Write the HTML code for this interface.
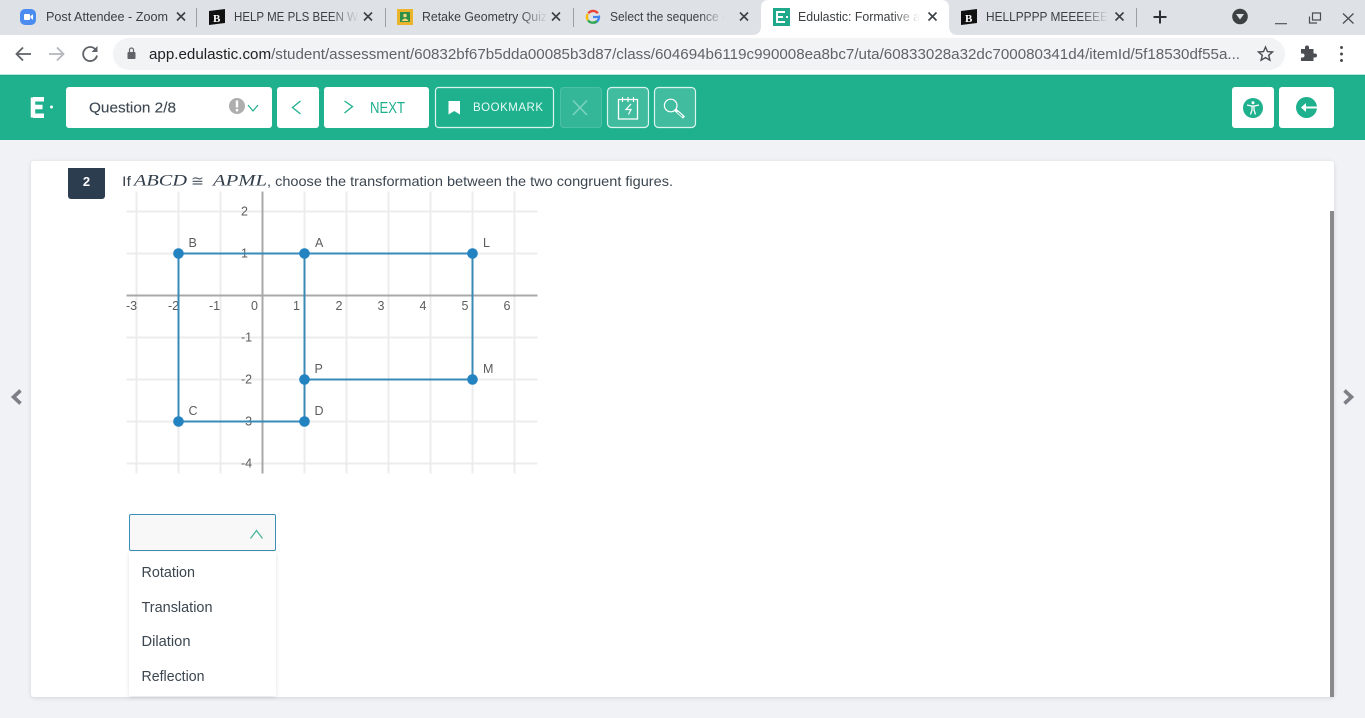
<!DOCTYPE html>
<html><head><meta charset="utf-8"><title>Edulastic</title>
<style>
html,body{margin:0;padding:0;width:1365px;height:718px;overflow:hidden;background:#f0f2f6}
svg{display:block;position:absolute;left:0;top:0;filter:blur(.3px)}
text{font-family:"Liberation Sans",sans-serif}
.tab{font-size:12.5px;fill:#3c4043}
.x{stroke:#3c4043;stroke-width:1.6;fill:none}
.g{stroke:#ececec;stroke-width:2;fill:none}
.n{font-size:12.5px;fill:#5c5c5c}
.l{font-size:12.5px;fill:#5c5c5c}
.m{font-family:"Liberation Serif",serif;font-style:italic;font-size:15.5px;fill:#333f4b}
.q{font-size:14px;fill:#3c4650}
.opt{font-size:14.500px;fill:#3b4650}
</style></head><body>
<svg width="1365" height="718" viewBox="0 0 1365 718" xmlns="http://www.w3.org/2000/svg">
<defs>
<linearGradient id="f1"><stop offset="0" stop-color="#dee1e6" stop-opacity="0"/><stop offset="1" stop-color="#dee1e6"/></linearGradient>
<linearGradient id="f2"><stop offset="0" stop-color="#fff" stop-opacity="0"/><stop offset="1" stop-color="#fff"/></linearGradient>
<filter id="sh" x="-10%" y="-10%" width="120%" height="120%"><feDropShadow dx="0" dy="1" stdDeviation="2" flood-color="#000" flood-opacity=".12"/></filter>
</defs>

<!-- tab strip -->
<rect width="1365" height="35" fill="#dee1e6"/>
<rect y="35" width="1365" height="39" fill="#fff"/>
<rect y="74" width="1365" height="1" fill="#b5ece0"/>
<path d="M752 35q9 0 9-9V8q0-8 8-8h172q8 0 8 8v18q0 9 9 9z" fill="#fff"/>

<!-- tab 1 zoom -->
<rect x="20" y="9" width="16" height="16" rx="5" fill="#4a8cf0"/>
<rect x="24" y="14" width="6" height="6" rx="1" fill="#fff"/><path d="M30.500 16l2.500-1.800v5.600l-2.500-1.800z" fill="#fff"/>
<text class="tab" x="46" y="21" textLength="122" lengthAdjust="spacingAndGlyphs">Post Attendee - Zoom</text>
<path class="x" d="M177 12.500l8 8M185 12.500l-8 8"/>
<rect x="196" y="8" width="1" height="19" fill="#9aa0a6"/>
<!-- tab 2 -->
<path d="M209 11l16-2v14l-16 2z" fill="#111"/><text x="213" y="22" font-size="11" font-weight="700" fill="#fff" style="font-family:'Liberation Serif',serif">B</text>
<text class="tab" x="234" y="21" textLength="124" lengthAdjust="spacingAndGlyphs">HELP ME PLS BEEN W</text>
<rect x="330" y="8" width="29" height="20" fill="url(#f1)"/>
<path class="x" d="M364 12.500l8 8M372 12.500l-8 8"/>
<rect x="385" y="8" width="1" height="19" fill="#9aa0a6"/>
<!-- tab 3 -->
<rect x="397" y="9" width="16" height="16" fill="#eab42c"/><rect x="400" y="12" width="10" height="10" fill="#2f8f46"/><circle cx="405" cy="15.500" r="1.800" fill="#f4d77a"/><path d="M401.500 21q3.500-5 7 0z" fill="#f4d77a"/>
<text class="tab" x="422" y="21" textLength="125" lengthAdjust="spacingAndGlyphs">Retake Geometry Quiz</text>
<rect x="520" y="8" width="28" height="20" fill="url(#f1)"/>
<path class="x" d="M552 12.500l8 8M560 12.500l-8 8"/>
<rect x="573" y="8" width="1" height="19" fill="#9aa0a6"/>
<!-- tab 4 G -->
<circle cx="593" cy="17" r="6" fill="none" stroke="#4285f4" stroke-width="2.400" stroke-dasharray="10 28" stroke-dashoffset="2"/>
<path d="M597.800 13.300a6 6 0 0 0-9.500 0" fill="none" stroke="#ea4335" stroke-width="2.400"/>
<path d="M587.800 14a6 6 0 0 0 0 6" fill="none" stroke="#fbbc05" stroke-width="2.400"/>
<path d="M588 20.300a6 6 0 0 0 9 .7" fill="none" stroke="#34a853" stroke-width="2.400"/>
<path d="M593 17h6.500" stroke="#4285f4" stroke-width="2.200"/>
<text class="tab" x="610" y="21" textLength="122" lengthAdjust="spacingAndGlyphs">Select the sequence of</text>
<rect x="700" y="8" width="24" height="20" fill="url(#f1)"/>
<rect x="724" y="8" width="12" height="20" fill="#dee1e6"/>
<path class="x" d="M740 12.500l8 8M748 12.500l-8 8"/>
<!-- tab 5 active -->
<rect x="773" y="8" width="17" height="18" fill="#1fa98a"/>
<path d="M777 12h8M777 17h6M777 22h8M777 11v12" stroke="#fff" stroke-width="2" fill="none"/><rect x="786" y="16" width="2" height="2" fill="#fff"/>
<text class="tab" x="798" y="21" textLength="122" lengthAdjust="spacingAndGlyphs">Edulastic: Formative a</text>
<rect x="892" y="8" width="28" height="20" fill="url(#f2)"/>
<path class="x" d="M928.500 12.500l8 8M936.500 12.500l-8 8"/>
<!-- tab 6 -->
<path d="M961 11l16-2v14l-16 2z" fill="#111"/><text x="965" y="22" font-size="11" font-weight="700" fill="#fff" style="font-family:'Liberation Serif',serif">B</text>
<text class="tab" x="986" y="21" textLength="122" lengthAdjust="spacingAndGlyphs">HELLPPPP MEEEEEE</text>
<rect x="1082" y="8" width="26" height="20" fill="url(#f1)"/>
<path class="x" d="M1115.500 12.500l8 8M1123.500 12.500l-8 8"/>
<rect x="1136" y="8" width="1" height="19" fill="#9aa0a6"/>
<path d="M1160 10.500v13M1153.500 17h13" stroke="#2c2f33" stroke-width="2" fill="none"/>
<!-- window controls -->
<circle cx="1240" cy="16.500" r="7.800" fill="#3c4043"/><path d="M1236 14h8l-4 5.500z" fill="#dee1e6"/>
<rect x="1275" y="23" width="12" height="1.300" fill="#5f6368"/>
<path d="M1309.500 16.500v6.500h7.500" fill="none" stroke="#4a4d51" stroke-width="1.200"/><path d="M1312.500 13h8v7h-8z" fill="none" stroke="#4a4d51" stroke-width="1.200"/>
<path d="M1343 13.500l10.500 10M1353.500 13.500l-10.500 10" stroke="#4a4d51" stroke-width="1.300"/>

<!-- address bar -->
<path d="M31 54H17M23 47.500L16.500 54l6.500 6.500" fill="none" stroke="#5f6368" stroke-width="1.800"/>
<path d="M49 54h14M57 47.500l6.500 6.500-6.500 6.500" fill="none" stroke="#b4b7bb" stroke-width="1.800"/>
<path d="M95.500 49.500a7 7 0 1 0 1.500 6" fill="none" stroke="#5f6368" stroke-width="1.800"/><path d="M97.500 46v6h-6z" fill="#5f6368"/>
<rect x="113" y="38" width="1172" height="32" rx="16" fill="#f1f3f4"/>
<rect x="127.500" y="52" width="8" height="7" rx="1" fill="#5f6368"/><path d="M129.500 52v-2a2 2 0 0 1 4 0v2" fill="none" stroke="#5f6368" stroke-width="1.200"/>
<text x="149" y="59" font-size="14.300" fill="#5f6368" textLength="1091" lengthAdjust="spacingAndGlyphs"><tspan fill="#202124">app.edulastic.com</tspan>/student/assessment/60832bf67b5dda00085b3d87/class/604694b6119c990008ea8bc7/uta/60833028a32dc700080341d4/itemId/5f18530df55a...</text>
<path d="M1265.500 47l2 4.600 5 .4-3.800 3.300 1.200 4.900-4.400-2.600-4.400 2.600 1.200-4.900-3.800-3.300 5-.4z" fill="none" stroke="#4a4d51" stroke-width="1.400"/>
<path d="M1301 49h4v-1.500a2 2 0 0 1 4 0V49h4.500v4.500h1.500a2 2 0 0 1 0 4h-1.500V61H1301v-3.500h1.500a2 2 0 0 0 0-4H1301z" fill="#4a4d51"/>
<circle cx="1341.500" cy="47.500" r="1.500" fill="#4a4d51"/><circle cx="1341.500" cy="54" r="1.500" fill="#4a4d51"/><circle cx="1341.500" cy="60.500" r="1.500" fill="#4a4d51"/>

<!-- teal toolbar -->
<rect y="75" width="1365" height="65" fill="#1fb08e"/>
<rect y="75" width="1365" height="1" fill="#1da588"/>
<path d="M33 99.300h11M33 107h9.500M33 115.700h11M33 97.500v20" fill="none" stroke="#fff" stroke-width="4.500"/>
<circle cx="51.500" cy="107" r="1.500" fill="#fff"/>

<rect x="66" y="87" width="206" height="41" rx="3" fill="#fff"/>
<text x="89" y="112.500" font-size="15" fill="#3d4852" stroke="#3d4852" stroke-width=".12" textLength="87" lengthAdjust="spacingAndGlyphs">Question 2/8</text>
<circle cx="237" cy="106" r="8" fill="#aeaeae"/><rect x="235.800" y="100.500" width="2.400" height="7" fill="#fff"/><rect x="235.800" y="109" width="2.400" height="2.400" fill="#fff"/>
<path d="M248 105l5 6 5-6" fill="none" stroke="#1fb08e" stroke-width="1.200"/>

<rect x="277" y="87" width="42" height="41" rx="3" fill="#fff"/>
<path d="M300.500 101l-8 6.500 8 6.500" fill="none" stroke="#1fb08e" stroke-width="1.300"/>

<rect x="324" y="87" width="105" height="41" rx="3" fill="#fff"/>
<path d="M344.500 101l8 5.500-8 6.500" fill="none" stroke="#1fb08e" stroke-width="1.300"/>
<text x="370" y="113" font-size="15.500" fill="#1fb08e" textLength="35" lengthAdjust="spacingAndGlyphs">NEXT</text>

<rect x="435.500" y="87.500" width="118" height="40" rx="3" fill="none" stroke="#d9f5ee" stroke-width="1.200"/>
<path d="M448.500 101h11.500v13.500l-5.750-3.500-5.750 3.500z" fill="#fff"/>
<text x="473" y="111" font-size="11.500" fill="#e8faf5" textLength="70">BOOKMARK</text>

<rect x="560.500" y="87.500" width="41" height="40" rx="3" fill="#ffffff18" stroke="#4cc0a6" stroke-width="1"/>
<path d="M573 100.500l14 14.500M587 100.500l-14 14.500" stroke="#7dd3bf" stroke-width="1.600"/>

<rect x="607.500" y="87.500" width="41" height="40" rx="4" fill="#ffffff28" stroke="#d9f5ee" stroke-width="1.200"/>
<path d="M618.500 99.500h19v19.500h-19z" fill="none" stroke="#fff" stroke-width="1.300"/>
<path d="M622.500 97v5M628 97v5M633.500 97v5" stroke="#fff" stroke-width="1.200"/>
<path d="M631 104l-5 5.500h5l-2.500 5" fill="none" stroke="#fff" stroke-width="1.200"/>

<rect x="654.500" y="87.500" width="41" height="40" rx="4" fill="#ffffff28" stroke="#d9f5ee" stroke-width="1.200"/>
<circle cx="670.700" cy="105.500" r="6.300" fill="none" stroke="#fff" stroke-width="1.200"/>
<path d="M675.500 110l8.500 7.500" stroke="#fff" stroke-width="3"/>
<path d="M677.500 112l5 4.500" stroke="#3cbca0" stroke-width="1"/>

<rect x="1232" y="87" width="42" height="41" rx="3" fill="#fff"/>
<circle cx="1253" cy="108" r="10" fill="#1fb08e"/>
<circle cx="1253" cy="102.800" r="1.500" fill="#fff"/>
<path d="M1247 105l4.500 1h3l4.500-1M1252 106v4l-1.500 4.500M1254 106v4l1.500 4.500" fill="none" stroke="#fff" stroke-width="1.300"/>

<rect x="1279" y="87" width="55" height="41" rx="3" fill="#fff"/>
<circle cx="1306.500" cy="107.500" r="10.500" fill="#1fb08e"/>
<path d="M1303 107.500h14" stroke="#fff" stroke-width="2"/>
<path d="M1301 107.500l5-4.500v9z" fill="#fff"/>

<!-- card -->
<rect x="31" y="161" width="1303" height="536" rx="3" fill="#fff" filter="url(#sh)"/>
<rect x="1330" y="211" width="4" height="486" fill="#8a8a8a"/>

<!-- side arrows -->
<path d="M20.500 390.500l-7 6.500 7 6.500" fill="none" stroke="#7c7f86" stroke-width="3.600"/>
<path d="M1344.500 390.500l7 6.500-7 6.500" fill="none" stroke="#7c7f86" stroke-width="3.600"/>

<!-- question -->
<path d="M68 168h37v28a3 3 0 0 1-3 3H71a3 3 0 0 1-3-3z" fill="#2b3d4f"/>
<text x="86.500" y="186" font-size="13" font-weight="700" fill="#fff" text-anchor="middle">2</text>
<text class="q" x="122" y="186" textLength="9" lengthAdjust="spacingAndGlyphs">If</text>
<text class="m" x="134" y="185.500" textLength="53" lengthAdjust="spacingAndGlyphs">ABCD</text>
<text x="191" y="186" font-size="15" fill="#5a6470" style="font-family:'DejaVu Sans',sans-serif" textLength="13" lengthAdjust="spacingAndGlyphs">≅</text>
<text class="m" x="213" y="185.500" textLength="54" lengthAdjust="spacingAndGlyphs">APML</text>
<text class="q" x="267" y="186" textLength="406" lengthAdjust="spacingAndGlyphs">, choose the transformation between the two congruent figures.</text>

<g transform="translate(-.5 -.5)">
<!-- graph grid -->
<path class="g" d="M137 192v282M179 192v282M221 192v282M305 192v282M347 192v282M389 192v282M431 192v282M473 192v282M515 192v282"/>
<path class="g" d="M127 212h411M127 254h411M127 338h411M127 380h411M127 422h411M127 464h411"/>
<path d="M127 296h411M263 192v282" stroke="#a8a8a8" stroke-width="2" fill="none"/>

<g text-anchor="middle">
<text class="n" x="132" y="310.500">-3</text><text class="n" x="174" y="310.500">-2</text><text class="n" x="215" y="310.500">-1</text><text class="n" x="255" y="310.500">0</text><text class="n" x="297" y="310.500">1</text><text class="n" x="339.500" y="310.500">2</text><text class="n" x="381.500" y="310.500">3</text><text class="n" x="423.500" y="310.500">4</text><text class="n" x="465.500" y="310.500">5</text><text class="n" x="507.500" y="310.500">6</text>
<text class="n" x="245" y="216">2</text><text class="n" x="245" y="258">1</text><text class="n" x="247" y="342">-1</text><text class="n" x="247" y="384">-2</text><text class="n" x="247" y="426">-3</text><text class="n" x="247" y="468">-4</text>
</g>

<!-- shapes -->
<path d="M179 254H305V422H179z" fill="none" stroke="#3a8ab8" stroke-width="2"/>
<path d="M305 254H473V380H305z" fill="none" stroke="#3a8ab8" stroke-width="2"/>
<g fill="#2382c0">
<circle cx="179" cy="254" r="5.300"/><circle cx="305" cy="254" r="5.300"/><circle cx="473" cy="254" r="5.300"/><circle cx="305" cy="380" r="5.300"/><circle cx="473" cy="380" r="5.300"/><circle cx="179" cy="422" r="5.300"/><circle cx="305" cy="422" r="5.300"/>
</g>
<text class="l" x="189" y="247.500">B</text><text class="l" x="315.500" y="247.500">A</text><text class="l" x="483.500" y="247.500">L</text>
<text class="l" x="315" y="373.500">P</text><text class="l" x="483.500" y="373.500">M</text>
<text class="l" x="189" y="415.500">C</text><text class="l" x="315" y="415.500">D</text>
</g>

<!-- dropdown -->
<rect x="129.500" y="514.500" width="146" height="36" rx="1.500" fill="#f8f8f8" stroke="#3d8fb5" stroke-width="1"/>
<path d="M250.500 538.500l6-8 6 8" fill="none" stroke="#4db59c" stroke-width="1.300"/>
<rect x="129" y="552" width="147" height="144" rx="2" fill="#fff" filter="url(#sh)"/>
<text class="opt" x="141.500" y="577" textLength="53.500" lengthAdjust="spacingAndGlyphs">Rotation</text>
<text class="opt" x="141.500" y="612" textLength="71" lengthAdjust="spacingAndGlyphs">Translation</text>
<text class="opt" x="141.500" y="646" textLength="49" lengthAdjust="spacingAndGlyphs">Dilation</text>
<text class="opt" x="141.500" y="681" textLength="63" lengthAdjust="spacingAndGlyphs">Reflection</text>
</svg>
</body></html>
